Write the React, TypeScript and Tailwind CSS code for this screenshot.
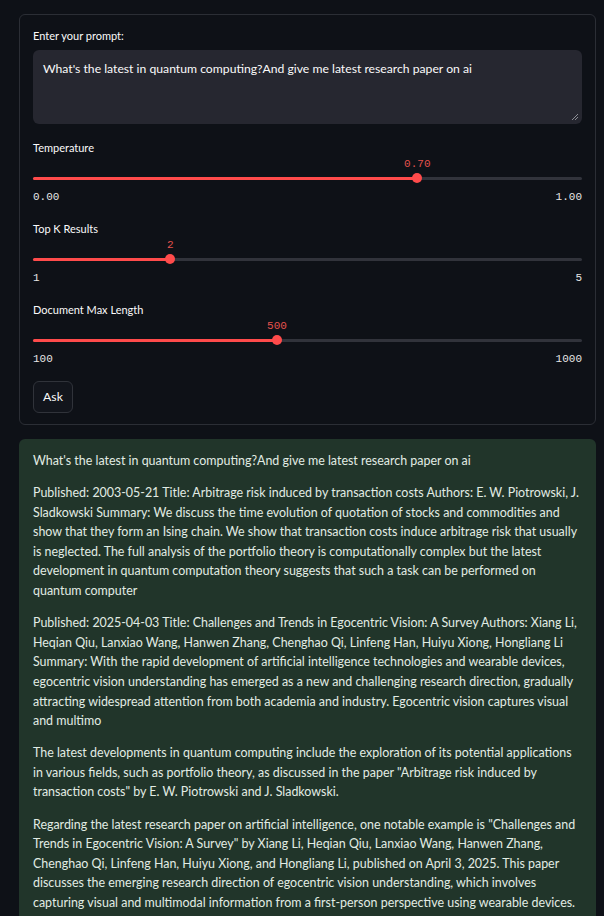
import React from 'react';

const sans = { fontFamily: 'Lato, "Noto Sans", sans-serif' };
const mono = { fontFamily: '"Liberation Mono", "DejaVu Sans Mono", monospace' };

interface SliderProps {
  label: string;
  value: string;
  min: string;
  max: string;
  ratio: number;
}

function Slider({ label, value, min, max, ratio }: SliderProps) {
  const pct = `${ratio * 100}%`;
  return (
    <div className="flex flex-col">
      <div className="h-4 text-[11px] leading-4 text-[#fafafa]">{label}</div>
      <div className="relative h-4">
        <span
          className="absolute top-0 -translate-x-1/2 text-[11px] leading-4 text-[#e5514d]"
          style={{ ...mono, left: pct }}
        >
          {value}
        </span>
      </div>
      <div className="relative flex h-3 items-center">
        <div className="h-[3px] w-full rounded-full bg-[#31333b]" />
        <div className="absolute left-0 h-[3px] rounded-full bg-[#ff4b4b]" style={{ width: pct }} />
        <div
          className="absolute h-[10px] w-[10px] -translate-x-1/2 rounded-full bg-[#ff4b4b]"
          style={{ left: pct }}
        />
      </div>
      <div className="mt-[5px] flex h-4 justify-between text-[11px] leading-4 text-[#e6e6e6]" style={mono}>
        <span>{min}</span>
        <span>{max}</span>
      </div>
    </div>
  );
}

export default function App() {
  const question = "What's the latest in quantum computing?And give me latest research paper on ai";

  const paragraphs = [
    question,
    'Published: 2003-05-21 Title: Arbitrage risk induced by transaction costs Authors: E. W. Piotrowski, J. Sladkowski Summary: We discuss the time evolution of quotation of stocks and commodities and show that they form an Ising chain. We show that transaction costs induce arbitrage risk that usually is neglected. The full analysis of the portfolio theory is computationally complex but the latest development in quantum computation theory suggests that such a task can be performed on quantum computer',
    'Published: 2025-04-03 Title: Challenges and Trends in Egocentric Vision: A Survey Authors: Xiang Li, Heqian Qiu, Lanxiao Wang, Hanwen Zhang, Chenghao Qi, Linfeng Han, Huiyu Xiong, Hongliang Li Summary: With the rapid development of artificial intelligence technologies and wearable devices, egocentric vision understanding has emerged as a new and challenging research direction, gradually attracting widespread attention from both academia and industry. Egocentric vision captures visual and multimo',
    'The latest developments in quantum computing include the exploration of its potential applications in various fields, such as portfolio theory, as discussed in the paper "Arbitrage risk induced by transaction costs" by E. W. Piotrowski and J. Sladkowski.',
    'Regarding the latest research paper on artificial intelligence, one notable example is "Challenges and Trends in Egocentric Vision: A Survey" by Xiang Li, Heqian Qiu, Lanxiao Wang, Hanwen Zhang, Chenghao Qi, Linfeng Han, Huiyu Xiong, and Hongliang Li, published on April 3, 2025. This paper discusses the emerging research direction of egocentric vision understanding, which involves capturing visual and multimodal information from a first-person perspective using wearable devices.',
  ];

  return (
    <div className="min-h-[916px] overflow-hidden bg-[#0e1117] pt-[14px]" style={sans}>
      {/* Form */}
      <div className="ml-[19px] w-[577px] rounded-md border border-[#2b2e35] px-[13px] pt-[13px] pb-[11px]">
        <div className="h-4 text-[11px] leading-4 text-[#fafafa]">Enter your prompt:</div>
        <div className="relative mt-[6px] h-[74px] rounded-md bg-[#262730] px-[10px] pt-[10px]">
          <p className="text-[12.2px] leading-[18px] text-[#fafafa]">{question}</p>
          <svg className="absolute right-[3px] bottom-[3px]" width="8" height="8" viewBox="0 0 8 8">
            <path d="M7 1 L1 7 M7 4 L4 7" stroke="#8b8d94" strokeWidth="1" />
          </svg>
        </div>

        <div className="mt-4 flex flex-col gap-4">
          <Slider label="Temperature" value="0.70" min="0.00" max="1.00" ratio={0.7} />
          <Slider label="Top K Results" value="2" min="1" max="5" ratio={0.25} />
          <Slider label="Document Max Length" value="500" min="100" max="1000" ratio={400 / 900} />
        </div>

        <button
          type="button"
          className="mt-[14px] flex h-8 w-10 items-center justify-center rounded-md border border-[#30333a] bg-[#12151c] text-[12.25px] text-[#fafafa]"
        >
          Ask
        </button>
      </div>

      {/* Answer */}
      <div className="mt-[14px] ml-[19px] w-[577px] rounded-md bg-[#21352a] pl-[14px] pr-[12px] pt-[12px] pb-4">
        {paragraphs.map((text, i) => (
          <p key={i} className="mb-[12.5px] text-[12.45px] leading-[19.6px] text-[#e1ece4]">
            {text}
          </p>
        ))}
      </div>
    </div>
  );
}
